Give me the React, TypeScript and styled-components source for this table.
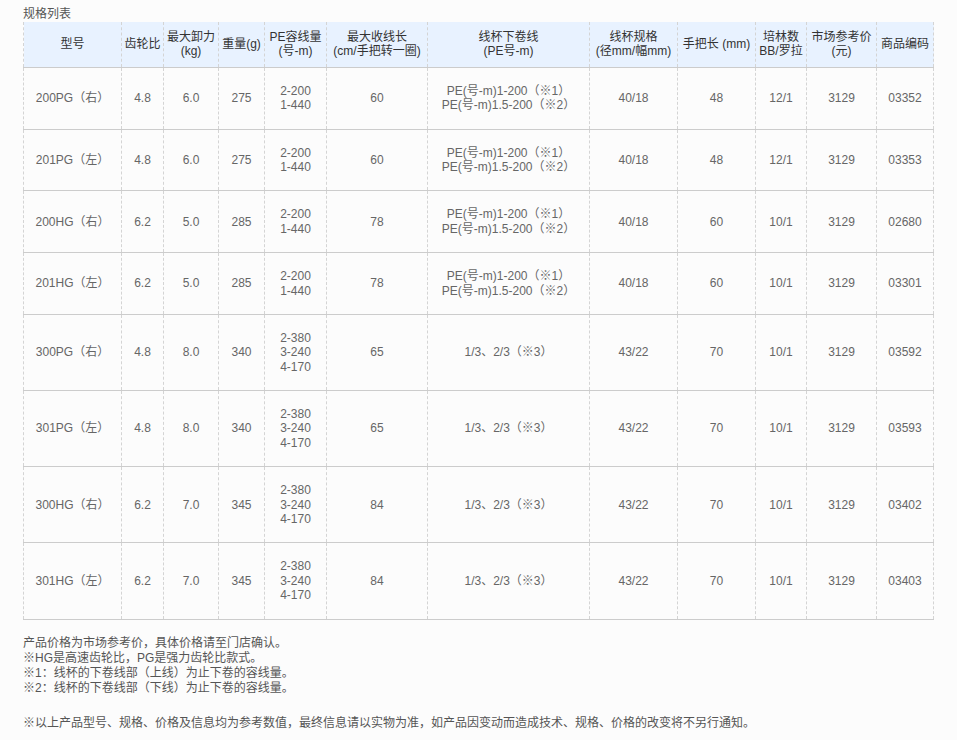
import React from 'react';
import styled, { createGlobalStyle } from 'styled-components';

const GlobalStyle = createGlobalStyle`
  html, body {
    margin: 0;
    padding: 0;
    background: #ffffff;
  }
  body {
    font-family: "Liberation Sans", Arial, "Noto Sans CJK SC", sans-serif;
  }
`;

const Page = styled.div`
  width: 957px;
  min-height: 740px;
  background: #fcfcfc;
  padding: 7px 0 0 23px;
  box-sizing: border-box;
  font-size: 12px;
  color: #666;
`;

const Title = styled.div`
  line-height: 15px;
  color: #555;
`;

const Table = styled.table`
  width: 910px;
  table-layout: fixed;
  border-collapse: collapse;
  font-size: 12px;
  line-height: 1.2;
`;

const HeadCell = styled.th`
  background: #e8f2ff;
  color: #333;
  font-weight: normal;
  text-align: center;
  vertical-align: middle;
  padding: 8px 2px;
  border-left: 1px dashed #d4d4d4;
  border-right: 1px dashed #d4d4d4;
  border-bottom: 1px solid #cccccc;
  white-space: nowrap;
`;

const Cell = styled.td`
  color: #666;
  text-align: center;
  vertical-align: middle;
  padding: 16px 2px;
  border-left: 1px dashed #d4d4d4;
  border-right: 1px dashed #d4d4d4;
  border-bottom: 1px solid #cccccc;
  white-space: nowrap;
`;

const Notes = styled.div`
  margin-top: 16px;
  line-height: 15px;
  color: #555;
`;

const Disclaimer = styled.div`
  margin-top: 20px;
  line-height: 15px;
  color: #555;
`;

const widths = [98, 42, 55, 46, 62, 101, 162, 88, 78, 51, 70, 57];

const headers: React.ReactNode[] = [
  '型号',
  '齿轮比',
  <>最大卸力<br />(kg)</>,
  '重量(g)',
  <>PE容线量<br />(号-m)</>,
  <>最大收线长<br />(cm/手把转一圈)</>,
  <>线杯下卷线<br />(PE号-m)</>,
  <>线杯规格<br />(径mm/幅mm)</>,
  '手把长 (mm)',
  <>培林数<br />BB/罗拉</>,
  <>市场参考价<br />(元)</>,
  '商品编码',
];

type Row = {
  model: string;
  ratio: string;
  drag: string;
  weight: string;
  pe: string[];
  retrieve: string;
  spool: string[];
  spec: string;
  handle: string;
  bearings: string;
  price: string;
  code: string;
};

const small = ['2-200', '1-440'];
const large = ['2-380', '3-240', '4-170'];
const smallSpool = ['PE(号-m)1-200（※1）', 'PE(号-m)1.5-200（※2）'];
const largeSpool = ['1/3、2/3（※3）'];

const rows: Row[] = [
  { model: '200PG（右）', ratio: '4.8', drag: '6.0', weight: '275', pe: small, retrieve: '60', spool: smallSpool, spec: '40/18', handle: '48', bearings: '12/1', price: '3129', code: '03352' },
  { model: '201PG（左）', ratio: '4.8', drag: '6.0', weight: '275', pe: small, retrieve: '60', spool: smallSpool, spec: '40/18', handle: '48', bearings: '12/1', price: '3129', code: '03353' },
  { model: '200HG（右）', ratio: '6.2', drag: '5.0', weight: '285', pe: small, retrieve: '78', spool: smallSpool, spec: '40/18', handle: '60', bearings: '10/1', price: '3129', code: '02680' },
  { model: '201HG（左）', ratio: '6.2', drag: '5.0', weight: '285', pe: small, retrieve: '78', spool: smallSpool, spec: '40/18', handle: '60', bearings: '10/1', price: '3129', code: '03301' },
  { model: '300PG（右）', ratio: '4.8', drag: '8.0', weight: '340', pe: large, retrieve: '65', spool: largeSpool, spec: '43/22', handle: '70', bearings: '10/1', price: '3129', code: '03592' },
  { model: '301PG（左）', ratio: '4.8', drag: '8.0', weight: '340', pe: large, retrieve: '65', spool: largeSpool, spec: '43/22', handle: '70', bearings: '10/1', price: '3129', code: '03593' },
  { model: '300HG（右）', ratio: '6.2', drag: '7.0', weight: '345', pe: large, retrieve: '84', spool: largeSpool, spec: '43/22', handle: '70', bearings: '10/1', price: '3129', code: '03402' },
  { model: '301HG（左）', ratio: '6.2', drag: '7.0', weight: '345', pe: large, retrieve: '84', spool: largeSpool, spec: '43/22', handle: '70', bearings: '10/1', price: '3129', code: '03403' },
];

function Lines({ items }: { items: string[] }) {
  return (
    <>
      {items.map((t, i) => (
        <React.Fragment key={i}>
          {i > 0 && <br />}
          {t}
        </React.Fragment>
      ))}
    </>
  );
}

export default function App() {
  return (
    <>
      <GlobalStyle />
      <Page>
        <Title>规格列表</Title>
        <Table>
          <colgroup>
            {widths.map((w, i) => (
              <col key={i} style={{ width: w }} />
            ))}
          </colgroup>
          <thead>
            <tr>
              {headers.map((h, i) => (
                <HeadCell key={i}>{h}</HeadCell>
              ))}
            </tr>
          </thead>
          <tbody>
            {rows.map((r) => (
              <tr key={r.code}>
                <Cell>{r.model}</Cell>
                <Cell>{r.ratio}</Cell>
                <Cell>{r.drag}</Cell>
                <Cell>{r.weight}</Cell>
                <Cell><Lines items={r.pe} /></Cell>
                <Cell>{r.retrieve}</Cell>
                <Cell><Lines items={r.spool} /></Cell>
                <Cell>{r.spec}</Cell>
                <Cell>{r.handle}</Cell>
                <Cell>{r.bearings}</Cell>
                <Cell>{r.price}</Cell>
                <Cell>{r.code}</Cell>
              </tr>
            ))}
          </tbody>
        </Table>
        <Notes>
          产品价格为市场参考价，具体价格请至门店确认。<br />
          ※HG是高速齿轮比，PG是强力齿轮比款式。<br />
          ※1：线杯的下卷线部（上线）为止下卷的容线量。<br />
          ※2：线杯的下卷线部（下线）为止下卷的容线量。
        </Notes>
        <Disclaimer>
          ※以上产品型号、规格、价格及信息均为参考数值，最终信息请以实物为准，如产品因变动而造成技术、规格、价格的改变将不另行通知。
        </Disclaimer>
      </Page>
    </>
  );
}
